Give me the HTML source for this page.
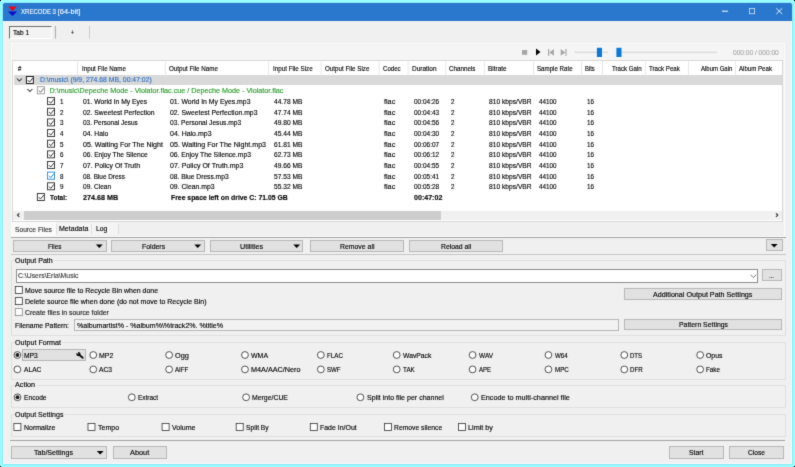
<!DOCTYPE html>
<html><head><meta charset="utf-8"><title>XRECODE 3</title>
<style>
html,body{margin:0;padding:0;}
body{width:795px;height:467px;overflow:hidden;background:#98fdfd;position:relative;font-family:"Liberation Sans",sans-serif;}
#root{position:absolute;left:0;top:0;width:795px;height:467px;will-change:transform;filter:url(#soft);}
.a{position:absolute;display:block;}
.t{position:absolute;white-space:pre;-webkit-text-stroke:0.14px currentColor;line-height:10px;height:10px;transform-origin:0 50%;font-family:"Liberation Sans",sans-serif;}
.k{position:absolute;background:#000;width:1px;height:1px;}
#ov{position:absolute;left:0;top:0;}
</style></head><body>
<svg width="0" height="0" style="position:absolute"><defs><filter id="soft" x="0" y="0" width="100%" height="100%" color-interpolation-filters="sRGB"><feConvolveMatrix order="3" kernelMatrix="0.0144 0.0912 0.0144 0.0912 0.5776 0.0912 0.0144 0.0912 0.0144" edgeMode="duplicate"/></filter></defs></svg>
<div id="root">
<div class="k" style="left:0;top:0"></div><div class="k" style="right:0;top:0"></div><div class="k" style="left:0;bottom:0"></div><div class="k" style="right:0;bottom:0"></div>
<div class="a" style="left:3.00px;top:3.00px;width:789.20px;height:461.00px;background:#f0f0f0;border-radius:1.5px;box-shadow:0 0 0 0.5px #7fd6f5, inset 0 0 0 1px #f9f9f9;"></div>
<div class="a" style="left:3.00px;top:3.00px;width:789.20px;height:17.80px;background:#2a78cd;border-radius:1.5px 1.5px 0 0;"></div>
<div class="a" style="left:9.00px;top:26.00px;width:42.80px;height:12.70px;background:#f3f3f3;border-top:1px solid #6d6d6d;border-left:1px solid #6d6d6d;border-right:1px solid #fff;border-bottom:1px solid #fff;box-sizing:border-box;"></div>
<div class="a" style="left:11.00px;top:42.80px;width:773.50px;height:194.00px;background:#f0f0f0;border:1px solid #fcfcfc;box-sizing:border-box;"></div>
<div class="a" style="left:12.50px;top:45.00px;width:770.00px;height:15.00px;background:#f5f5f5;"></div>
<div class="a" style="left:12.20px;top:60.40px;width:771.20px;height:161.20px;background:#d8d8d8;"></div>
<div class="a" style="left:13.00px;top:61.20px;width:769.40px;height:160.00px;background:#fff;"></div>
<div class="a" style="left:13.80px;top:75.20px;width:768.60px;height:10.20px;background:#d9d9d9;"></div>
<div class="a" style="left:13.00px;top:210.80px;width:769.40px;height:9.40px;background:#f0f0f0;"></div>
<div class="a" style="left:24.00px;top:210.80px;width:417.00px;height:9.40px;background:#cdcdcd;"></div>
<div class="a" style="left:11.00px;top:221.80px;width:45.30px;height:15.20px;background:#fafafa;"></div>
<div class="a" style="left:56.80px;top:222.60px;width:61.50px;height:12.20px;background:#f4f4f4;"></div>
<div class="a" style="left:11.00px;top:237.00px;width:774.50px;height:0.90px;background:#a3a3a3;"></div>
<div class="a" style="left:11.00px;top:253.60px;width:774.50px;height:0.90px;background:#c4c4c4;"></div>
<div class="a" style="left:13.00px;top:240.20px;width:94.00px;height:11.60px;background:#e1e1e1;border:1px solid #b7b7b7;box-sizing:border-box;"></div>
<div class="a" style="left:111.40px;top:240.20px;width:93.40px;height:11.60px;background:#e1e1e1;border:1px solid #b7b7b7;box-sizing:border-box;"></div>
<div class="a" style="left:210.30px;top:240.20px;width:93.10px;height:11.60px;background:#e1e1e1;border:1px solid #b7b7b7;box-sizing:border-box;"></div>
<div class="a" style="left:310.00px;top:240.20px;width:93.90px;height:11.60px;background:#e1e1e1;border:1px solid #b7b7b7;box-sizing:border-box;"></div>
<div class="a" style="left:408.90px;top:240.20px;width:94.10px;height:11.60px;background:#e1e1e1;border:1px solid #b7b7b7;box-sizing:border-box;"></div>
<div class="a" style="left:766.00px;top:239.40px;width:17.00px;height:12.10px;background:#e1e1e1;border:1px solid #b7b7b7;box-sizing:border-box;"></div>
<div class="a" style="left:11.30px;top:260.40px;width:774.70px;height:75.20px;border:1px solid #dfdfdf;box-sizing:border-box;border-radius:1px;"></div>
<div class="a" style="left:13.50px;top:257.40px;width:40.80px;height:6.00px;background:#f0f0f0;"></div>
<div class="a" style="left:16.00px;top:269.20px;width:741.80px;height:13.40px;background:#fff;border:1px solid #8e8e8e;box-sizing:border-box;"></div>
<div class="a" style="left:762.30px;top:269.00px;width:19.60px;height:12.00px;background:#e1e1e1;border:1px solid #b7b7b7;box-sizing:border-box;"></div>
<div class="a" style="left:623.90px;top:288.20px;width:158.00px;height:11.60px;background:#e1e1e1;border:1px solid #b7b7b7;box-sizing:border-box;"></div>
<div class="a" style="left:74.20px;top:318.60px;width:544.70px;height:12.00px;background:#f2f2f2;border:1px solid #b6b6b6;box-sizing:border-box;"></div>
<div class="a" style="left:623.90px;top:318.70px;width:158.00px;height:11.80px;background:#e1e1e1;border:1px solid #b7b7b7;box-sizing:border-box;"></div>
<div class="a" style="left:11.30px;top:342.20px;width:774.70px;height:37.60px;border:1px solid #dfdfdf;box-sizing:border-box;border-radius:1px;"></div>
<div class="a" style="left:13.50px;top:339.20px;width:49.10px;height:6.00px;background:#f0f0f0;"></div>
<div class="a" style="left:22.20px;top:349.30px;width:63.70px;height:11.30px;background:#e1e1e1;border:1px solid #b4b4b4;box-sizing:border-box;"></div>
<div class="a" style="left:11.30px;top:384.70px;width:774.70px;height:22.90px;border:1px solid #dfdfdf;box-sizing:border-box;border-radius:1px;"></div>
<div class="a" style="left:13.60px;top:381.70px;width:23.10px;height:6.00px;background:#f0f0f0;"></div>
<div class="a" style="left:11.30px;top:414.40px;width:774.70px;height:23.00px;border:1px solid #dfdfdf;box-sizing:border-box;border-radius:1px;"></div>
<div class="a" style="left:13.60px;top:411.40px;width:51.50px;height:6.00px;background:#f0f0f0;"></div>
<div class="a" style="left:10.00px;top:439.90px;width:775.40px;height:0.90px;background:#a3a3a3;"></div>
<div class="a" style="left:10.80px;top:446.30px;width:96.10px;height:12.30px;background:#e1e1e1;border:1px solid #b7b7b7;box-sizing:border-box;"></div>
<div class="a" style="left:112.50px;top:446.30px;width:54.30px;height:12.30px;background:#e1e1e1;border:1px solid #b7b7b7;box-sizing:border-box;"></div>
<div class="a" style="left:668.90px;top:446.30px;width:55.50px;height:12.30px;background:#e1e1e1;border:1px solid #b7b7b7;box-sizing:border-box;"></div>
<div class="a" style="left:728.60px;top:446.30px;width:55.10px;height:12.30px;background:#e1e1e1;border:1px solid #b7b7b7;box-sizing:border-box;"></div>
<svg id="ov" width="795" height="467" viewBox="0 0 795 467">
<polygon points="8.1,6.6 16.9,6.6 12.5,11.0" fill="#f8000c"/><polygon points="7.9,11.5 17.1,11.5 12.5,15.9" fill="#0a0ad0"/>
<path d="M722 11.2 H727.9" stroke="#fff" stroke-width="1.0" fill="none"/><rect x="749.4" y="8.5" width="5.2" height="5.2" stroke="#cfe0f4" stroke-width="0.8" fill="none"/><path d="M776.3 8.3 L782.2 14.0 M782.2 8.3 L776.3 14.0" stroke="#fff" stroke-width="0.85" fill="none"/>
<rect x="54.9" y="26" width="0.9" height="12.5" fill="#a0a0a0"/><rect x="89.1" y="26" width="0.9" height="12.5" fill="#c8c8c8"/>
<rect x="522" y="50" width="5.2" height="4.8" fill="#a6a6a6"/>
<polygon points="536,48.5 540.5,52 536,55.5" fill="#000"/>
<rect x="548" y="49" width="1.2" height="6.8" fill="#a6a6a6"/><polygon points="553.9,49 553.9,55.8 549.3,52.4" fill="#a6a6a6"/>
<polygon points="560.7,49 560.7,55.8 565.3,52.4" fill="#a6a6a6"/><rect x="565.4" y="49" width="1.2" height="6.8" fill="#a6a6a6"/>
<rect x="574.5" y="51.6" width="33.5" height="1.5" fill="#dcdcdc"/><rect x="596.9" y="47.8" width="5.1" height="9.2" fill="#0a79d8"/>
<rect x="616.5" y="51.6" width="100.5" height="1.5" fill="#dcdcdc"/><rect x="616.4" y="47.8" width="5.1" height="9.2" fill="#0a79d8"/>
<rect x="77.05" y="61.2" width="0.9" height="13.60" fill="#e5e5e5"/>
<rect x="164.85" y="61.2" width="0.9" height="13.60" fill="#e5e5e5"/>
<rect x="268.25" y="61.2" width="0.9" height="13.60" fill="#e5e5e5"/>
<rect x="320.75" y="61.2" width="0.9" height="13.60" fill="#e5e5e5"/>
<rect x="378.75" y="61.2" width="0.9" height="13.60" fill="#e5e5e5"/>
<rect x="407.65" y="61.2" width="0.9" height="13.60" fill="#e5e5e5"/>
<rect x="445.35" y="61.2" width="0.9" height="13.60" fill="#e5e5e5"/>
<rect x="483.85" y="61.2" width="0.9" height="13.60" fill="#e5e5e5"/>
<rect x="532.95" y="61.2" width="0.9" height="13.60" fill="#e5e5e5"/>
<rect x="580.95" y="61.2" width="0.9" height="13.60" fill="#e5e5e5"/>
<rect x="602.15" y="61.2" width="0.9" height="13.60" fill="#e5e5e5"/>
<rect x="644.85" y="61.2" width="0.9" height="13.60" fill="#e5e5e5"/>
<rect x="688.15" y="61.2" width="0.9" height="13.60" fill="#e5e5e5"/>
<rect x="734.95" y="61.2" width="0.9" height="13.60" fill="#e5e5e5"/>
<path d="M16.90 78.50 L19.40 81.10 L21.90 78.50" stroke="#333" stroke-width="1.05" fill="none"/>
<rect x="26.38" y="76.52" width="6.95" height="6.95" fill="#fff" stroke="#111" stroke-width="0.95"/><path d="M27.80 80.16 L29.53 82.05 L32.85 78.02" stroke="#111" stroke-width="0.9" fill="none"/>
<path d="M27.40 89.00 L29.90 91.60 L32.40 89.00" stroke="#333" stroke-width="1.05" fill="none"/>
<rect x="37.30" y="86.75" width="7.10" height="7.10" fill="#fff" stroke="#8a8a8a" stroke-width="0.8"/><path d="M38.80 90.46 L40.53 92.35 L43.85 88.32" stroke="#555" stroke-width="0.9" fill="none"/>
<rect x="47.55" y="97.60" width="7.00" height="7.00" fill="#fff" stroke="#2a2a2a" stroke-width="0.9"/><path d="M49.00 101.26 L50.73 103.15 L54.05 99.12" stroke="#222" stroke-width="0.9" fill="none"/>
<rect x="47.55" y="108.25" width="7.00" height="7.00" fill="#fff" stroke="#2a2a2a" stroke-width="0.9"/><path d="M49.00 111.91 L50.73 113.80 L54.05 109.77" stroke="#222" stroke-width="0.9" fill="none"/>
<rect x="47.55" y="118.90" width="7.00" height="7.00" fill="#fff" stroke="#2a2a2a" stroke-width="0.9"/><path d="M49.00 122.56 L50.73 124.45 L54.05 120.42" stroke="#222" stroke-width="0.9" fill="none"/>
<rect x="47.55" y="129.55" width="7.00" height="7.00" fill="#fff" stroke="#2a2a2a" stroke-width="0.9"/><path d="M49.00 133.21 L50.73 135.10 L54.05 131.07" stroke="#222" stroke-width="0.9" fill="none"/>
<rect x="47.55" y="140.20" width="7.00" height="7.00" fill="#fff" stroke="#2a2a2a" stroke-width="0.9"/><path d="M49.00 143.86 L50.73 145.75 L54.05 141.72" stroke="#222" stroke-width="0.9" fill="none"/>
<rect x="47.55" y="150.85" width="7.00" height="7.00" fill="#fff" stroke="#2a2a2a" stroke-width="0.9"/><path d="M49.00 154.51 L50.73 156.40 L54.05 152.38" stroke="#222" stroke-width="0.9" fill="none"/>
<rect x="47.55" y="161.50" width="7.00" height="7.00" fill="#fff" stroke="#2a2a2a" stroke-width="0.9"/><path d="M49.00 165.16 L50.73 167.05 L54.05 163.03" stroke="#222" stroke-width="0.9" fill="none"/>
<rect x="47.50" y="172.10" width="7.10" height="7.10" fill="#fff" stroke="#0a79d8" stroke-width="0.8"/><path d="M49.00 175.81 L50.73 177.70 L54.05 173.68" stroke="#0a79d8" stroke-width="0.9" fill="none"/>
<rect x="47.55" y="182.80" width="7.00" height="7.00" fill="#fff" stroke="#2a2a2a" stroke-width="0.9"/><path d="M49.00 186.46 L50.73 188.35 L54.05 184.32" stroke="#222" stroke-width="0.9" fill="none"/>
<rect x="37.35" y="193.50" width="7.00" height="7.00" fill="#fff" stroke="#2a2a2a" stroke-width="0.9"/><path d="M38.80 197.16 L40.53 199.05 L43.85 195.03" stroke="#222" stroke-width="0.9" fill="none"/>
<path d="M19.3 213.3 L17.5 215.1 L19.3 216.9" stroke="#2a2a2a" stroke-width="1.1" fill="none"/>
<path d="M776.0 213.3 L777.8 215.1 L776.0 216.9" stroke="#2a2a2a" stroke-width="1.1" fill="none"/>
<rect x="56.4" y="224" width="0.8" height="10" fill="#d8d8d8"/>
<rect x="91.0" y="224" width="0.8" height="10" fill="#d8d8d8"/>
<rect x="118.0" y="224" width="0.8" height="10" fill="#d8d8d8"/>
<polygon points="95.90,244.60 102.70,244.60 99.30,248.10" fill="#000"/>
<polygon points="194.30,244.60 201.10,244.60 197.70,248.10" fill="#000"/>
<polygon points="293.30,244.60 300.10,244.60 296.70,248.10" fill="#000"/>
<polygon points="770.80,244.05 777.60,244.05 774.20,247.55" fill="#000"/>
<path d="M750.7 274.8 L753.4 277.7 L756.1 274.8" stroke="#555" stroke-width="0.8" fill="none"/>
<rect x="15.30" y="286.40" width="7.00" height="7.00" fill="#fff" stroke="#333" stroke-width="0.8"/>
<rect x="15.30" y="297.60" width="7.00" height="7.00" fill="#fff" stroke="#333" stroke-width="0.8"/>
<rect x="15.30" y="308.60" width="7.00" height="7.00" fill="#fff" stroke="#858585" stroke-width="0.8"/>
<path d="M78.8 354.5 L82.7 357.8" stroke="#0a0a0a" stroke-width="1.9" stroke-linecap="round" fill="none"/><circle cx="78.4" cy="354.1" r="2.15" fill="#0a0a0a"/><path d="M75.2 352.6 L78.5 354.0 L77.6 350.8 L75.0 350.8 Z" fill="#e1e1e1"/>
<circle cx="17.40" cy="355.00" r="3.4" fill="#fff" stroke="#333" stroke-width="0.85"/><circle cx="17.40" cy="355.00" r="1.95" fill="#1a1a1a"/>
<circle cx="93.26" cy="355.00" r="3.4" fill="#fff" stroke="#333" stroke-width="0.85"/>
<circle cx="169.12" cy="355.00" r="3.4" fill="#fff" stroke="#333" stroke-width="0.85"/>
<circle cx="244.98" cy="355.00" r="3.4" fill="#fff" stroke="#333" stroke-width="0.85"/>
<circle cx="320.84" cy="355.00" r="3.4" fill="#fff" stroke="#333" stroke-width="0.85"/>
<circle cx="396.70" cy="355.00" r="3.4" fill="#fff" stroke="#333" stroke-width="0.85"/>
<circle cx="472.56" cy="355.00" r="3.4" fill="#fff" stroke="#333" stroke-width="0.85"/>
<circle cx="548.42" cy="355.00" r="3.4" fill="#fff" stroke="#333" stroke-width="0.85"/>
<circle cx="624.28" cy="355.00" r="3.4" fill="#fff" stroke="#333" stroke-width="0.85"/>
<circle cx="700.14" cy="355.00" r="3.4" fill="#fff" stroke="#333" stroke-width="0.85"/>
<circle cx="17.40" cy="369.40" r="3.4" fill="#fff" stroke="#333" stroke-width="0.85"/>
<circle cx="93.26" cy="369.40" r="3.4" fill="#fff" stroke="#333" stroke-width="0.85"/>
<circle cx="169.12" cy="369.40" r="3.4" fill="#fff" stroke="#333" stroke-width="0.85"/>
<circle cx="244.98" cy="369.40" r="3.4" fill="#fff" stroke="#333" stroke-width="0.85"/>
<circle cx="320.84" cy="369.40" r="3.4" fill="#fff" stroke="#333" stroke-width="0.85"/>
<circle cx="396.70" cy="369.40" r="3.4" fill="#fff" stroke="#333" stroke-width="0.85"/>
<circle cx="472.56" cy="369.40" r="3.4" fill="#fff" stroke="#333" stroke-width="0.85"/>
<circle cx="548.42" cy="369.40" r="3.4" fill="#fff" stroke="#333" stroke-width="0.85"/>
<circle cx="624.28" cy="369.40" r="3.4" fill="#fff" stroke="#333" stroke-width="0.85"/>
<circle cx="700.14" cy="369.40" r="3.4" fill="#fff" stroke="#333" stroke-width="0.85"/>
<circle cx="17.50" cy="397.30" r="3.4" fill="#fff" stroke="#333" stroke-width="0.85"/><circle cx="17.50" cy="397.30" r="1.95" fill="#1a1a1a"/>
<circle cx="131.80" cy="397.30" r="3.4" fill="#fff" stroke="#333" stroke-width="0.85"/>
<circle cx="246.10" cy="397.30" r="3.4" fill="#fff" stroke="#333" stroke-width="0.85"/>
<circle cx="360.40" cy="397.30" r="3.4" fill="#fff" stroke="#333" stroke-width="0.85"/>
<circle cx="474.70" cy="397.30" r="3.4" fill="#fff" stroke="#333" stroke-width="0.85"/>
<rect x="13.90" y="423.50" width="7.00" height="7.00" fill="#fff" stroke="#333" stroke-width="0.8"/>
<rect x="88.00" y="423.50" width="7.00" height="7.00" fill="#fff" stroke="#333" stroke-width="0.8"/>
<rect x="162.10" y="423.50" width="7.00" height="7.00" fill="#fff" stroke="#333" stroke-width="0.8"/>
<rect x="236.20" y="423.50" width="7.00" height="7.00" fill="#fff" stroke="#333" stroke-width="0.8"/>
<rect x="310.30" y="423.50" width="7.00" height="7.00" fill="#fff" stroke="#333" stroke-width="0.8"/>
<rect x="384.40" y="423.50" width="7.00" height="7.00" fill="#fff" stroke="#333" stroke-width="0.8"/>
<rect x="458.50" y="423.50" width="7.00" height="7.00" fill="#fff" stroke="#333" stroke-width="0.8"/>
<polygon points="96.80,451.05 103.60,451.05 100.20,454.55" fill="#000"/>
</svg>
<div class="t" style="left:20.80px;top:7.40px;font-size:7.4px;color:#f4f8fd;transform:scaleX(0.8184);">XRECODE 3</div>
<div class="t" style="left:57.80px;top:7.40px;font-size:7.4px;color:#f4f8fd;">[64-bit]</div>
<div class="t" style="left:12.60px;top:27.80px;font-size:7.2px;color:#000;transform:scaleX(0.9197);">Tab 1</div>
<div class="t" style="left:70.60px;top:27.80px;font-size:7.2px;color:#000;transform:scaleX(0.7135);">+</div>
<div class="t" style="left:733.40px;top:47.60px;font-size:7.2px;color:#a8a8a8;transform:scaleX(0.9152);">000:00 / 000:00</div>
<div class="t" style="left:17.60px;top:63.80px;font-size:7.2px;color:#000;transform:scaleX(0.7991);">#</div>
<div class="t" style="left:81.80px;top:63.80px;font-size:7.2px;color:#000;transform:scaleX(0.8657);">Input File Name</div>
<div class="t" style="left:168.80px;top:63.80px;font-size:7.2px;color:#000;transform:scaleX(0.8702);">Output File Name</div>
<div class="t" style="left:272.50px;top:63.80px;font-size:7.2px;color:#000;transform:scaleX(0.8702);">Input File Size</div>
<div class="t" style="left:324.60px;top:63.80px;font-size:7.2px;color:#000;transform:scaleX(0.8687);">Output File Size</div>
<div class="t" style="left:383.00px;top:63.80px;font-size:7.2px;color:#000;transform:scaleX(0.8456);">Codec</div>
<div class="t" style="left:411.90px;top:63.80px;font-size:7.2px;color:#000;transform:scaleX(0.9039);">Duration</div>
<div class="t" style="left:448.90px;top:63.80px;font-size:7.2px;color:#000;transform:scaleX(0.8678);">Channels</div>
<div class="t" style="left:487.80px;top:63.80px;font-size:7.2px;color:#000;transform:scaleX(0.8938);">Bitrate</div>
<div class="t" style="left:537.40px;top:63.80px;font-size:7.2px;color:#000;transform:scaleX(0.8577);">Sample Rate</div>
<div class="t" style="left:585.20px;top:63.80px;font-size:7.2px;color:#000;transform:scaleX(0.8165);">Bits</div>
<div class="t" style="left:612.10px;top:63.80px;font-size:7.2px;color:#000;transform:scaleX(0.8528);">Track Gain</div>
<div class="t" style="left:649.10px;top:63.80px;font-size:7.2px;color:#000;transform:scaleX(0.8549);">Track Peak</div>
<div class="t" style="left:700.70px;top:63.80px;font-size:7.2px;color:#000;transform:scaleX(0.8347);">Album Gain</div>
<div class="t" style="left:738.90px;top:63.80px;font-size:7.2px;color:#000;transform:scaleX(0.8501);">Album Peak</div>
<div class="t" style="left:39.50px;top:75.40px;font-size:7.2px;color:#2a6fc4;transform:scaleX(0.9511);">D:\music\ (9/9, 274.68 MB, 00:47:02)</div>
<div class="t" style="left:49.60px;top:86.20px;font-size:7.2px;color:#2a9a2a;">D:\music\Depeche Mode - Violator.flac.cue / Depeche Mode - Violator.flac</div>
<div class="t" style="left:60.40px;top:97.00px;font-size:7.2px;color:#000;transform:scaleX(0.8740);">1</div>
<div class="t" style="left:83.00px;top:97.00px;font-size:7.2px;color:#000;transform:scaleX(0.9401);">01. World In My Eyes</div>
<div class="t" style="left:170.00px;top:97.00px;font-size:7.2px;color:#000;transform:scaleX(0.9561);">01. World In My Eyes.mp3</div>
<div class="t" style="left:273.70px;top:97.00px;font-size:7.2px;color:#000;transform:scaleX(0.9215);">44.78 MB</div>
<div class="t" style="left:384.20px;top:97.00px;font-size:7.2px;color:#000;transform:scaleX(1.0085);">flac</div>
<div class="t" style="left:413.60px;top:97.00px;font-size:7.2px;color:#000;transform:scaleX(0.8991);">00:04:26</div>
<div class="t" style="left:450.90px;top:97.00px;font-size:7.2px;color:#000;transform:scaleX(0.8740);">2</div>
<div class="t" style="left:488.90px;top:97.00px;font-size:7.2px;color:#000;transform:scaleX(0.9277);">810 kbps/VBR</div>
<div class="t" style="left:539.20px;top:97.00px;font-size:7.2px;color:#000;transform:scaleX(0.8790);">44100</div>
<div class="t" style="left:587.00px;top:97.00px;font-size:7.2px;color:#000;transform:scaleX(0.8740);">16</div>
<div class="t" style="left:60.40px;top:107.65px;font-size:7.2px;color:#000;transform:scaleX(0.8740);">2</div>
<div class="t" style="left:83.00px;top:107.65px;font-size:7.2px;color:#000;transform:scaleX(0.9429);">02. Sweetest Perfection</div>
<div class="t" style="left:170.00px;top:107.65px;font-size:7.2px;color:#000;transform:scaleX(0.9516);">02. Sweetest Perfection.mp3</div>
<div class="t" style="left:273.70px;top:107.65px;font-size:7.2px;color:#000;transform:scaleX(0.9215);">47.74 MB</div>
<div class="t" style="left:384.20px;top:107.65px;font-size:7.2px;color:#000;transform:scaleX(1.0085);">flac</div>
<div class="t" style="left:413.60px;top:107.65px;font-size:7.2px;color:#000;transform:scaleX(0.8991);">00:04:43</div>
<div class="t" style="left:450.90px;top:107.65px;font-size:7.2px;color:#000;transform:scaleX(0.8740);">2</div>
<div class="t" style="left:488.90px;top:107.65px;font-size:7.2px;color:#000;transform:scaleX(0.9277);">810 kbps/VBR</div>
<div class="t" style="left:539.20px;top:107.65px;font-size:7.2px;color:#000;transform:scaleX(0.8790);">44100</div>
<div class="t" style="left:587.00px;top:107.65px;font-size:7.2px;color:#000;transform:scaleX(0.8740);">16</div>
<div class="t" style="left:60.40px;top:118.30px;font-size:7.2px;color:#000;transform:scaleX(0.8740);">3</div>
<div class="t" style="left:83.00px;top:118.30px;font-size:7.2px;color:#000;transform:scaleX(0.8965);">03. Personal Jesus</div>
<div class="t" style="left:170.00px;top:118.30px;font-size:7.2px;color:#000;transform:scaleX(0.9231);">03. Personal Jesus.mp3</div>
<div class="t" style="left:273.70px;top:118.30px;font-size:7.2px;color:#000;transform:scaleX(0.9215);">49.80 MB</div>
<div class="t" style="left:384.20px;top:118.30px;font-size:7.2px;color:#000;transform:scaleX(1.0085);">flac</div>
<div class="t" style="left:413.60px;top:118.30px;font-size:7.2px;color:#000;transform:scaleX(0.8991);">00:04:56</div>
<div class="t" style="left:450.90px;top:118.30px;font-size:7.2px;color:#000;transform:scaleX(0.8740);">2</div>
<div class="t" style="left:488.90px;top:118.30px;font-size:7.2px;color:#000;transform:scaleX(0.9277);">810 kbps/VBR</div>
<div class="t" style="left:539.20px;top:118.30px;font-size:7.2px;color:#000;transform:scaleX(0.8790);">44100</div>
<div class="t" style="left:587.00px;top:118.30px;font-size:7.2px;color:#000;transform:scaleX(0.8740);">16</div>
<div class="t" style="left:60.40px;top:128.95px;font-size:7.2px;color:#000;transform:scaleX(0.8740);">4</div>
<div class="t" style="left:83.00px;top:128.95px;font-size:7.2px;color:#000;transform:scaleX(0.9397);">04. Halo</div>
<div class="t" style="left:170.00px;top:128.95px;font-size:7.2px;color:#000;transform:scaleX(0.9714);">04. Halo.mp3</div>
<div class="t" style="left:273.70px;top:128.95px;font-size:7.2px;color:#000;transform:scaleX(0.9215);">45.44 MB</div>
<div class="t" style="left:384.20px;top:128.95px;font-size:7.2px;color:#000;transform:scaleX(1.0085);">flac</div>
<div class="t" style="left:413.60px;top:128.95px;font-size:7.2px;color:#000;transform:scaleX(0.8991);">00:04:30</div>
<div class="t" style="left:450.90px;top:128.95px;font-size:7.2px;color:#000;transform:scaleX(0.8740);">2</div>
<div class="t" style="left:488.90px;top:128.95px;font-size:7.2px;color:#000;transform:scaleX(0.9277);">810 kbps/VBR</div>
<div class="t" style="left:539.20px;top:128.95px;font-size:7.2px;color:#000;transform:scaleX(0.8790);">44100</div>
<div class="t" style="left:587.00px;top:128.95px;font-size:7.2px;color:#000;transform:scaleX(0.8740);">16</div>
<div class="t" style="left:60.40px;top:139.60px;font-size:7.2px;color:#000;transform:scaleX(0.8740);">5</div>
<div class="t" style="left:83.00px;top:139.60px;font-size:7.2px;color:#000;transform:scaleX(0.9799);">05. Waiting For The Night</div>
<div class="t" style="left:170.00px;top:139.60px;font-size:7.2px;color:#000;transform:scaleX(0.9852);">05. Waiting For The Night.mp3</div>
<div class="t" style="left:273.70px;top:139.60px;font-size:7.2px;color:#000;transform:scaleX(0.9215);">61.81 MB</div>
<div class="t" style="left:384.20px;top:139.60px;font-size:7.2px;color:#000;transform:scaleX(1.0085);">flac</div>
<div class="t" style="left:413.60px;top:139.60px;font-size:7.2px;color:#000;transform:scaleX(0.8991);">00:06:07</div>
<div class="t" style="left:450.90px;top:139.60px;font-size:7.2px;color:#000;transform:scaleX(0.8740);">2</div>
<div class="t" style="left:488.90px;top:139.60px;font-size:7.2px;color:#000;transform:scaleX(0.9277);">810 kbps/VBR</div>
<div class="t" style="left:539.20px;top:139.60px;font-size:7.2px;color:#000;transform:scaleX(0.8790);">44100</div>
<div class="t" style="left:587.00px;top:139.60px;font-size:7.2px;color:#000;transform:scaleX(0.8740);">16</div>
<div class="t" style="left:60.40px;top:150.25px;font-size:7.2px;color:#000;transform:scaleX(0.8740);">6</div>
<div class="t" style="left:83.00px;top:150.25px;font-size:7.2px;color:#000;transform:scaleX(0.9283);">06. Enjoy The Silence</div>
<div class="t" style="left:170.00px;top:150.25px;font-size:7.2px;color:#000;transform:scaleX(0.9439);">06. Enjoy The Silence.mp3</div>
<div class="t" style="left:273.70px;top:150.25px;font-size:7.2px;color:#000;transform:scaleX(0.9215);">62.73 MB</div>
<div class="t" style="left:384.20px;top:150.25px;font-size:7.2px;color:#000;transform:scaleX(1.0085);">flac</div>
<div class="t" style="left:413.60px;top:150.25px;font-size:7.2px;color:#000;transform:scaleX(0.8991);">00:06:12</div>
<div class="t" style="left:450.90px;top:150.25px;font-size:7.2px;color:#000;transform:scaleX(0.8740);">2</div>
<div class="t" style="left:488.90px;top:150.25px;font-size:7.2px;color:#000;transform:scaleX(0.9277);">810 kbps/VBR</div>
<div class="t" style="left:539.20px;top:150.25px;font-size:7.2px;color:#000;transform:scaleX(0.8790);">44100</div>
<div class="t" style="left:587.00px;top:150.25px;font-size:7.2px;color:#000;transform:scaleX(0.8740);">16</div>
<div class="t" style="left:60.40px;top:160.90px;font-size:7.2px;color:#000;transform:scaleX(0.8740);">7</div>
<div class="t" style="left:83.00px;top:160.90px;font-size:7.2px;color:#000;transform:scaleX(0.9641);">07. Policy Of Truth</div>
<div class="t" style="left:170.00px;top:160.90px;font-size:7.2px;color:#000;transform:scaleX(0.9770);">07. Policy Of Truth.mp3</div>
<div class="t" style="left:273.70px;top:160.90px;font-size:7.2px;color:#000;transform:scaleX(0.9215);">49.66 MB</div>
<div class="t" style="left:384.20px;top:160.90px;font-size:7.2px;color:#000;transform:scaleX(1.0085);">flac</div>
<div class="t" style="left:413.60px;top:160.90px;font-size:7.2px;color:#000;transform:scaleX(0.8991);">00:04:55</div>
<div class="t" style="left:450.90px;top:160.90px;font-size:7.2px;color:#000;transform:scaleX(0.8740);">2</div>
<div class="t" style="left:488.90px;top:160.90px;font-size:7.2px;color:#000;transform:scaleX(0.9277);">810 kbps/VBR</div>
<div class="t" style="left:539.20px;top:160.90px;font-size:7.2px;color:#000;transform:scaleX(0.8790);">44100</div>
<div class="t" style="left:587.00px;top:160.90px;font-size:7.2px;color:#000;transform:scaleX(0.8740);">16</div>
<div class="t" style="left:60.40px;top:171.55px;font-size:7.2px;color:#000;transform:scaleX(0.8740);">8</div>
<div class="t" style="left:83.00px;top:171.55px;font-size:7.2px;color:#000;transform:scaleX(0.8894);">08. Blue Dress</div>
<div class="t" style="left:170.00px;top:171.55px;font-size:7.2px;color:#000;transform:scaleX(0.9284);">08. Blue Dress.mp3</div>
<div class="t" style="left:273.70px;top:171.55px;font-size:7.2px;color:#000;transform:scaleX(0.9215);">57.53 MB</div>
<div class="t" style="left:384.20px;top:171.55px;font-size:7.2px;color:#000;transform:scaleX(1.0085);">flac</div>
<div class="t" style="left:413.60px;top:171.55px;font-size:7.2px;color:#000;transform:scaleX(0.8991);">00:05:41</div>
<div class="t" style="left:450.90px;top:171.55px;font-size:7.2px;color:#000;transform:scaleX(0.8740);">2</div>
<div class="t" style="left:488.90px;top:171.55px;font-size:7.2px;color:#000;transform:scaleX(0.9277);">810 kbps/VBR</div>
<div class="t" style="left:539.20px;top:171.55px;font-size:7.2px;color:#000;transform:scaleX(0.8790);">44100</div>
<div class="t" style="left:587.00px;top:171.55px;font-size:7.2px;color:#000;transform:scaleX(0.8740);">16</div>
<div class="t" style="left:60.40px;top:182.20px;font-size:7.2px;color:#000;transform:scaleX(0.8740);">9</div>
<div class="t" style="left:83.00px;top:182.20px;font-size:7.2px;color:#000;transform:scaleX(0.9149);">09. Clean</div>
<div class="t" style="left:170.00px;top:182.20px;font-size:7.2px;color:#000;transform:scaleX(0.9524);">09. Clean.mp3</div>
<div class="t" style="left:273.70px;top:182.20px;font-size:7.2px;color:#000;transform:scaleX(0.9215);">55.32 MB</div>
<div class="t" style="left:384.20px;top:182.20px;font-size:7.2px;color:#000;transform:scaleX(1.0085);">flac</div>
<div class="t" style="left:413.60px;top:182.20px;font-size:7.2px;color:#000;transform:scaleX(0.8991);">00:05:28</div>
<div class="t" style="left:450.90px;top:182.20px;font-size:7.2px;color:#000;transform:scaleX(0.8740);">2</div>
<div class="t" style="left:488.90px;top:182.20px;font-size:7.2px;color:#000;transform:scaleX(0.9277);">810 kbps/VBR</div>
<div class="t" style="left:539.20px;top:182.20px;font-size:7.2px;color:#000;transform:scaleX(0.8790);">44100</div>
<div class="t" style="left:587.00px;top:182.20px;font-size:7.2px;color:#000;transform:scaleX(0.8740);">16</div>
<div class="t" style="left:50.30px;top:192.90px;font-size:7.2px;color:#000;font-weight:bold;transform:scaleX(0.8970);">Total:</div>
<div class="t" style="left:83.00px;top:192.90px;font-size:7.2px;color:#000;font-weight:bold;">274.68 MB</div>
<div class="t" style="left:170.60px;top:192.90px;font-size:7.2px;color:#000;font-weight:bold;transform:scaleX(0.9516);">Free space left on drive C: 71.05 GB</div>
<div class="t" style="left:413.70px;top:192.90px;font-size:7.2px;color:#000;font-weight:bold;transform:scaleX(0.9853);">00:47:02</div>
<div class="t" style="left:14.60px;top:225.20px;font-size:7.2px;color:#333;transform:scaleX(0.9246);">Source Files</div>
<div class="t" style="left:58.60px;top:224.00px;font-size:7.2px;color:#000;transform:scaleX(0.9793);">Metadata</div>
<div class="t" style="left:95.60px;top:224.00px;font-size:7.2px;color:#000;transform:scaleX(0.9489);">Log</div>
<div class="t" style="left:47.80px;top:241.60px;font-size:7.2px;color:#000;transform:scaleX(0.8749);">Files</div>
<div class="t" style="left:141.60px;top:241.60px;font-size:7.2px;color:#000;transform:scaleX(0.9663);">Folders</div>
<div class="t" style="left:240.00px;top:241.60px;font-size:7.2px;color:#000;transform:scaleX(0.9955);">Utilities</div>
<div class="t" style="left:339.70px;top:241.60px;font-size:7.2px;color:#000;transform:scaleX(0.9579);">Remove all</div>
<div class="t" style="left:441.40px;top:241.60px;font-size:7.2px;color:#000;transform:scaleX(0.9494);">Reload all</div>
<div class="t" style="left:15.00px;top:256.10px;font-size:7.2px;color:#000;transform:scaleX(0.9837);">Output Path</div>
<div class="t" style="left:18.10px;top:271.30px;font-size:7.2px;color:#3a3a3a;transform:scaleX(0.9527);">C:\Users\Eria\Music</div>
<div class="t" style="left:769.00px;top:270.60px;font-size:7.2px;color:#000;transform:scaleX(0.8332);">...</div>
<div class="t" style="left:24.70px;top:285.70px;font-size:7.2px;color:#000;transform:scaleX(0.9682);">Move source file to Recycle Bin when done</div>
<div class="t" style="left:24.70px;top:296.90px;font-size:7.2px;color:#000;transform:scaleX(0.9706);">Delete source file when done (do not move to Recycle Bin)</div>
<div class="t" style="left:24.70px;top:307.90px;font-size:7.2px;color:#1c1c1c;transform:scaleX(0.9584);">Create files in source folder</div>
<div class="t" style="left:653.40px;top:289.60px;font-size:7.2px;color:#000;transform:scaleX(0.9953);">Additional Output Path Settings</div>
<div class="t" style="left:15.10px;top:320.50px;font-size:7.2px;color:#000;transform:scaleX(0.9520);">Filename Pattern:</div>
<div class="t" style="left:76.70px;top:320.50px;font-size:7.2px;color:#000;transform:scaleX(0.9796);">%albumartist% - %album%\%track2%. %title%</div>
<div class="t" style="left:678.50px;top:320.20px;font-size:7.2px;color:#000;transform:scaleX(0.9584);">Pattern Settings</div>
<div class="t" style="left:15.00px;top:337.90px;font-size:7.2px;color:#000;transform:scaleX(0.9932);">Output Format</div>
<div class="t" style="left:23.90px;top:350.60px;font-size:7.2px;color:#000;transform:scaleX(0.9321);">MP3</div>
<div class="t" style="left:99.46px;top:350.60px;font-size:7.2px;color:#000;transform:scaleX(0.9659);">MP2</div>
<div class="t" style="left:175.32px;top:350.60px;font-size:7.2px;color:#000;transform:scaleX(1.0214);">Ogg</div>
<div class="t" style="left:251.18px;top:350.60px;font-size:7.2px;color:#000;transform:scaleX(0.9718);">WMA</div>
<div class="t" style="left:327.04px;top:350.60px;font-size:7.2px;color:#000;transform:scaleX(0.8748);">FLAC</div>
<div class="t" style="left:402.90px;top:350.60px;font-size:7.2px;color:#000;transform:scaleX(0.9423);">WavPack</div>
<div class="t" style="left:478.76px;top:350.60px;font-size:7.2px;color:#000;transform:scaleX(0.9039);">WAV</div>
<div class="t" style="left:554.62px;top:350.60px;font-size:7.2px;color:#000;transform:scaleX(0.8646);">W64</div>
<div class="t" style="left:630.48px;top:350.60px;font-size:7.2px;color:#000;transform:scaleX(0.8333);">DTS</div>
<div class="t" style="left:706.34px;top:350.60px;font-size:7.2px;color:#000;transform:scaleX(0.9588);">Opus</div>
<div class="t" style="left:23.60px;top:365.00px;font-size:7.2px;color:#000;transform:scaleX(0.9251);">ALAC</div>
<div class="t" style="left:99.46px;top:365.00px;font-size:7.2px;color:#000;transform:scaleX(0.9353);">AC3</div>
<div class="t" style="left:175.32px;top:365.00px;font-size:7.2px;color:#000;transform:scaleX(0.8590);">AIFF</div>
<div class="t" style="left:251.18px;top:365.00px;font-size:7.2px;color:#000;transform:scaleX(1.0078);">M4A/AAC/Nero</div>
<div class="t" style="left:327.04px;top:365.00px;font-size:7.2px;color:#000;transform:scaleX(0.8502);">SWF</div>
<div class="t" style="left:402.90px;top:365.00px;font-size:7.2px;color:#000;transform:scaleX(0.8761);">TAK</div>
<div class="t" style="left:478.76px;top:365.00px;font-size:7.2px;color:#000;transform:scaleX(0.8398);">APE</div>
<div class="t" style="left:554.62px;top:365.00px;font-size:7.2px;color:#000;transform:scaleX(0.8625);">MPC</div>
<div class="t" style="left:630.48px;top:365.00px;font-size:7.2px;color:#000;transform:scaleX(0.8650);">DFR</div>
<div class="t" style="left:706.34px;top:365.00px;font-size:7.2px;color:#000;transform:scaleX(0.8746);">Fake</div>
<div class="t" style="left:15.10px;top:380.40px;font-size:7.2px;color:#000;transform:scaleX(1.0044);">Action</div>
<div class="t" style="left:23.80px;top:392.90px;font-size:7.2px;color:#000;transform:scaleX(0.9255);">Encode</div>
<div class="t" style="left:138.10px;top:392.90px;font-size:7.2px;color:#000;transform:scaleX(0.8971);">Extract</div>
<div class="t" style="left:252.40px;top:392.90px;font-size:7.2px;color:#000;transform:scaleX(0.9572);">Merge/CUE</div>
<div class="t" style="left:366.70px;top:392.90px;font-size:7.2px;color:#000;transform:scaleX(0.9815);">Split into file per channel</div>
<div class="t" style="left:481.00px;top:392.90px;font-size:7.2px;color:#000;transform:scaleX(1.0062);">Encode to multi-channel file</div>
<div class="t" style="left:15.10px;top:410.10px;font-size:7.2px;color:#000;transform:scaleX(0.9772);">Output Settings</div>
<div class="t" style="left:23.50px;top:422.70px;font-size:7.2px;color:#000;transform:scaleX(0.9689);">Normalize</div>
<div class="t" style="left:97.60px;top:422.70px;font-size:7.2px;color:#000;transform:scaleX(0.9763);">Tempo</div>
<div class="t" style="left:171.70px;top:422.70px;font-size:7.2px;color:#000;transform:scaleX(0.9743);">Volume</div>
<div class="t" style="left:245.80px;top:422.70px;font-size:7.2px;color:#000;transform:scaleX(0.9300);">Split By</div>
<div class="t" style="left:319.90px;top:422.70px;font-size:7.2px;color:#000;transform:scaleX(0.9679);">Fade In/Out</div>
<div class="t" style="left:394.00px;top:422.70px;font-size:7.2px;color:#000;transform:scaleX(0.9429);">Remove silence</div>
<div class="t" style="left:468.10px;top:422.70px;font-size:7.2px;color:#000;transform:scaleX(1.0078);">Limit by</div>
<div class="t" style="left:34.00px;top:448.05px;font-size:7.2px;color:#000;transform:scaleX(0.9842);">Tab/Settings</div>
<div class="t" style="left:130.00px;top:448.05px;font-size:7.2px;color:#000;transform:scaleX(1.0204);">About</div>
<div class="t" style="left:689.10px;top:448.05px;font-size:7.2px;color:#000;transform:scaleX(0.9536);">Start</div>
<div class="t" style="left:747.50px;top:448.05px;font-size:7.2px;color:#000;transform:scaleX(0.9235);">Close</div>
</div>
</body></html>
